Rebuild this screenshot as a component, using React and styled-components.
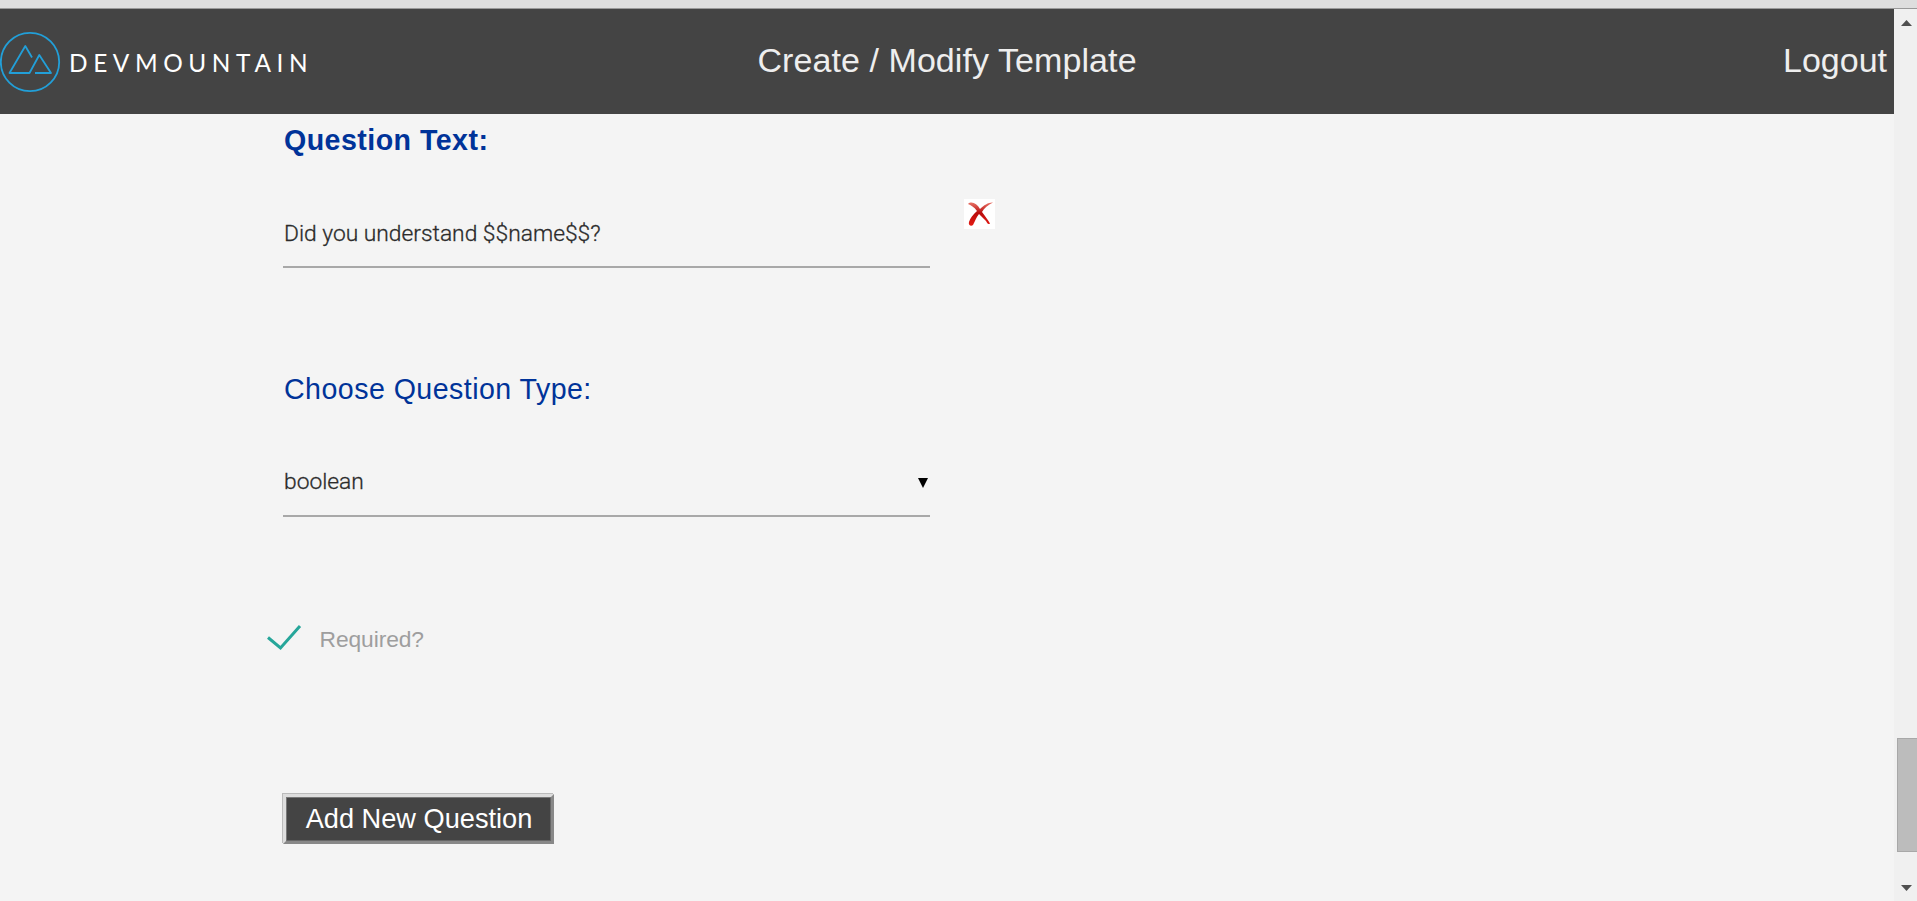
import React from "react";
import styled, { createGlobalStyle } from "styled-components";

const GlobalStyle = createGlobalStyle`
  * { box-sizing: border-box; }
  body { margin: 0; background: #f4f4f4; overflow: hidden; font-family: "Liberation Sans", Arial, sans-serif; }
`;

const Page = styled.div`
  display: flex;
  flex-direction: column;
  width: 100%;
  height: 901px;
`;

const WindowEdge = styled.div`
  flex: none;
  height: 9px;
  background: #dedede;
  border-bottom: 1px solid #999;
`;

const Viewport = styled.div`
  flex: 1;
  display: flex;
  min-height: 0;
`;

const Content = styled.div`
  flex: 1;
  display: flex;
  flex-direction: column;
`;

const Header = styled.header`
  flex: none;
  display: grid;
  grid-template-columns: 1fr auto 1fr;
  align-items: center;
  height: 105px;
  background: #444;
  color: #eee;
  font-size: 34px;
  line-height: 40px;
`;

const Brand = styled.div`
  display: flex;
  align-items: center;
  height: 62px;
`;

const BrandName = styled.span`
  margin-left: 8px;
  padding-top: 3px;
  color: #fff;
  font-family: Lato, sans-serif;
  font-size: 24.4px;
  line-height: 30px;
  letter-spacing: 5.6px;
`;

const Title = styled.span`
  padding-bottom: 3px;
  letter-spacing: 0.08px;
`;

const Logout = styled.a`
  justify-self: end;
  padding: 0 7px 3px 0;
`;

const Form = styled.main`
  display: flex;
  flex-direction: column;
  align-items: flex-start;
  padding: 9px 0 0 283px;
`;

const Label = styled.label`
  height: 34px;
  padding-left: 1px;
  color: #039;
  font-size: 28.6px;
  line-height: 34px;
  font-weight: ${(p) => (p.$bold ? 700 : 400)};
  letter-spacing: 0.45px;
`;

const FieldRow = styled.div`
  display: flex;
  align-items: flex-start;
  margin: ${(p) => p.$margin};
`;

const Field = styled.div`
  display: flex;
  align-items: center;
  justify-content: space-between;
  width: 647px;
  height: 69px;
  padding: 2px 2px 0 1px;
  border-bottom: 2px solid #a8a8a8;
  color: #2b2b2b;
  font: 300 22.8px/67px Roboto, sans-serif;
  -webkit-text-stroke: 0.3px #2b2b2b;
`;

const SelectValue = styled.span`
  padding-bottom: 2px;
  line-height: 65px;
`;

const DeleteButton = styled.button`
  width: 31px;
  height: 30px;
  margin-left: 34px;
  padding: 0;
  border: 0;
  background: #fff;
`;

const CheckRow = styled.div`
  display: flex;
  align-items: center;
  height: 30px;
  margin: 106px 0 0 -16px;
  color: #9e9e9e;
  font-size: 22.8px;
  line-height: 30px;
`;

const CheckLabel = styled.span`
  padding: 2px 0 0 17.5px;
  letter-spacing: -0.08px;
`;

const AddButton = styled.button`
  width: 271px;
  height: 50px;
  margin-top: 141px;
  padding: 1px 0 2px 1px;
  border: 3px solid;
  border-color: #ddd #888 #888 #ddd;
  box-shadow: inset 1px 1px #777, inset -1px -1px #666, -1px -1px #bbb;
  background: #444;
  color: #fff;
  font: 27.2px/36px "Liberation Sans", Arial, sans-serif;
`;

const Scrollbar = styled.div`
  flex: none;
  display: flex;
  flex-direction: column;
  align-items: flex-end;
  width: 23px;
  background: #f0f0f0;
`;

const Arrow = styled.svg`
  flex: none;
  margin: ${(p) => p.$margin};
`;

const Thumb = styled.div`
  flex: none;
  width: 20px;
  height: 114px;
  margin-top: 712px;
  border: 1px solid #a8a8a8;
  border-right: 0;
  background: #bcbcbc;
`;

function Logo() {
  return (
    <svg width="61" height="62" viewBox="0 0 61 62" fill="none" stroke="#229fd8" strokeWidth="1.8">
      <circle cx="30" cy="31" r="29.2" />
      <path d="M32 26.5 25.3 15 9.5 42H29.5L39.3 24 51 42H35" strokeLinejoin="round" />
    </svg>
  );
}

function RedCross() {
  return (
    <svg width="31" height="30" viewBox="0 0 31 30" display="block">
      <defs>
        <linearGradient id="cross" x1="0" y1="0" x2="0" y2="1">
          <stop offset="0" stopColor="#e87468" />
          <stop offset=".45" stopColor="#b90d0d" />
          <stop offset="1" stopColor="#e51b13" />
        </linearGradient>
      </defs>
      <path fill="url(#cross)" d="M4 5C7 2 13 4 16 10C20 6 25 3 29 3.5C24 6 20 9 18 13C21 17 24 21 26 24.5C24 26 23 24 22 22L15 15C12 19 11 22 9 26C7 28 4 26 5 23C6 19 9 16 13 12C10 8 7 6 4 5Z" />
    </svg>
  );
}

export default function App() {
  return (
    <Page>
      <GlobalStyle />
      <WindowEdge />
      <Viewport>
        <Content>
          <Header>
            <Brand>
              <Logo />
              <BrandName>DEVMOUNTAIN</BrandName>
            </Brand>
            <Title>Create / Modify Template</Title>
            <Logout>Logout</Logout>
          </Header>
          <Form>
            <Label $bold>Question Text:</Label>
            <FieldRow $margin="42px 0 0">
              <Field>Did you understand $$name$$?</Field>
              <DeleteButton aria-label="Delete question"><RedCross /></DeleteButton>
            </FieldRow>
            <FieldRow $margin="104px 0 0"><Label>Choose Question Type:</Label></FieldRow>
            <FieldRow $margin="42px 0 0">
              <Field>
                <SelectValue>boolean</SelectValue>
                <svg width="10" height="11" viewBox="0 0 10 11"><path d="M0 1h10L5 11z" /></svg>
              </Field>
            </FieldRow>
            <CheckRow>
              <svg width="35" height="26" viewBox="0 0 35 26" fill="none" stroke="#26a69a" strokeWidth="3">
                <path d="M1 12.5 13.5 23 33 1" />
              </svg>
              <CheckLabel>Required?</CheckLabel>
            </CheckRow>
            <AddButton>Add New Question</AddButton>
          </Form>
        </Content>
        <Scrollbar>
          <Arrow $margin="11px 5px 0 0" width="11" height="6" viewBox="0 0 11 6" fill="#505050"><path d="M0 6 5.5 0 11 6z" /></Arrow>
          <Thumb />
          <Arrow $margin="33px 5px 0 0" width="11" height="6" viewBox="0 0 11 6" fill="#505050"><path d="M0 0 5.5 6 11 0z" /></Arrow>
        </Scrollbar>
      </Viewport>
    </Page>
  );
}
